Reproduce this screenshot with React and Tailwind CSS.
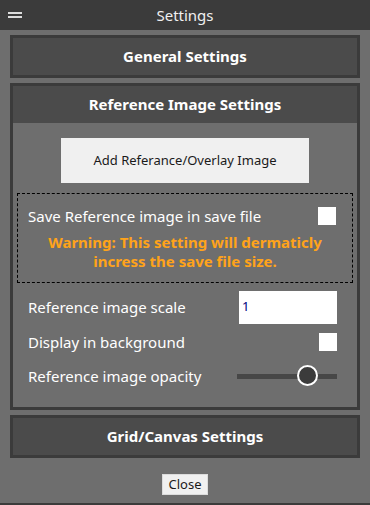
import React from 'react';

const font = { fontFamily: '"Noto Sans", "Open Sans", sans-serif' };

function Panel({ title, children }) {
  return (
    <div className="mx-[10px] border-[3px] border-[#3b3b3b] bg-[#4b4b4b]">
      <div className="h-[37px] flex items-center justify-center text-white font-bold text-[15px]">{title}</div>
      {children}
    </div>
  );
}

export default function App() {
  return (
    <div className="w-[370px] h-[505px] bg-[#6e6e6e] flex flex-col overflow-hidden" style={font}>
      <div className="h-[30px] shrink-0 bg-[#3b3b3b] relative flex items-center justify-center text-[#f0f0f0] text-[15px]">
        <div className="absolute left-[8px] top-[12px] flex flex-col gap-[2px]">
          <div className="w-[14px] h-[2px] bg-[#dcdcdc]" />
          <div className="w-[14px] h-[2px] bg-[#dcdcdc]" />
        </div>
        Settings
      </div>

      <div className="pt-[5px] flex flex-col gap-[5px]">
        <Panel title="General Settings" />

        <Panel title="Reference Image Settings">
          <div className="bg-[#6e6e6e] pt-[15px] pb-[15px] px-[4px]">
            <button className="block mx-auto w-[248px] h-[45px] bg-[#f0f0f0] text-[13px] text-[#1a1a1a]">
              Add Referance/Overlay Image
            </button>
            <div className="mt-[10px] border border-dashed border-black pl-[10px] pr-[16px] pt-[12px] pb-[11px]">
              <div className="flex items-center justify-between text-white text-[15px] leading-[20px]">
                <span>Save Reference image in save file</span>
                <span className="w-[18px] h-[18px] bg-white" />
              </div>
              <div className="mt-[7px] text-center font-bold text-[15px] leading-[19px] text-[#ffa31a] pl-[6px]">
                Warning: This setting will dermaticly<br />incress the save file size.
              </div>
            </div>
            <div className="mt-[7px] pl-[11px] pr-[16px] flex flex-col text-white text-[15px]">
              <div className="flex items-center justify-between h-[34px]">
                <span>Reference image scale</span>
                <div className="w-[98px] h-[33px] bg-white text-[#000080] text-[13px] px-[3px] flex items-center">1</div>
              </div>
              <div className="flex items-center justify-between h-[32px] mt-[2px]">
                <span>Display in background</span>
                <span className="w-[18px] h-[18px] bg-white" />
              </div>
              <div className="flex items-center justify-between h-[32px] mt-[2px]">
                <span>Reference image opacity</span>
                <div className="relative w-[100px] h-[22px] flex items-center">
                  <div className="w-full h-[5px] bg-[#474747]" />
                  <div className="absolute left-[60px] top-0 w-[21px] h-[21px] rounded-full bg-[#3b3b3b] border-2 border-white" />
                </div>
              </div>
            </div>
          </div>
        </Panel>

        <Panel title="Grid/Canvas Settings" />
      </div>

      <div className="flex justify-center mt-[16px]">
        <button className="w-[46px] h-[21px] bg-[#f0f0f0] border border-[#dcdcdc] text-[13px] text-[#1a1a1a] leading-none">Close</button>
      </div>
      <div className="mt-auto h-[2px] bg-[#3b3b3b]" />
    </div>
  );
}
